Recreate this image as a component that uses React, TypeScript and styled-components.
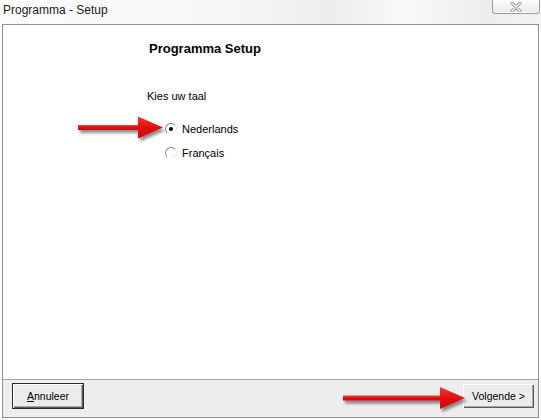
import React from "react";
import styled, { createGlobalStyle } from "styled-components";

const GlobalStyle = createGlobalStyle`
  html, body { margin: 0; padding: 0; background: #ffffff; }
  body { font-family: "Liberation Sans", Arial, sans-serif; }
  * { box-sizing: border-box; }
`;

const Page = styled.div`
  position: relative;
  width: 541px;
  height: 420px;
  display: flex;
  flex-direction: column;
  overflow: hidden;
  background: #ffffff;
`;

const TitleBar = styled.div`
  height: 24px;
  display: flex;
  align-items: flex-start;
  justify-content: space-between;
  background: linear-gradient(
    to right,
    #fcfcfc 0%,
    #f7f7f7 40%,
    #ededed 62%,
    #fafafa 75%,
    #ececec 90%,
    #f4f4f4 100%
  );
`;

const Title = styled.div`
  padding-left: 3px;
  padding-top: 2px;
  font-size: 12px;
  line-height: 16px;
  color: #1b1b1b;
`;

const CloseButton = styled.div`
  width: 48px;
  height: 14px;
  margin-right: 1px;
  border: 1px solid #9c9c9c;
  border-top: none;
  border-radius: 0 0 4px 4px;
  background: linear-gradient(to bottom, #fbfbfb, #e9e9e9);
  box-shadow: inset 0 -1px 0 #ffffff;
  display: flex;
  align-items: center;
  justify-content: center;
`;

const Window = styled.div`
  margin: 0 2px;
  height: 394px;
  border: 1px solid #8f8f8f;
  display: flex;
  flex-direction: column;
`;

const Content = styled.div`
  flex: 1;
  background: #ffffff;
  padding: 16px 0 0 144px;
  display: flex;
  flex-direction: column;
`;

const Heading = styled.div`
  font-size: 13px;
  font-weight: bold;
  line-height: 16px;
  color: #000000;
  padding-left: 2px;
`;

const Label = styled.div`
  margin-top: 32px;
  font-size: 11px;
  line-height: 14px;
  color: #000000;
`;

const RadioGroup = styled.div`
  margin-top: 19px;
  padding-left: 18px;
  display: flex;
  flex-direction: column;
  gap: 10px;
`;

const RadioRow = styled.label`
  display: flex;
  align-items: center;
  gap: 5px;
  height: 14px;
  font-size: 11px;
  color: #000000;
`;

const RadioCircle = styled.span<{ $checked?: boolean }>`
  width: 12px;
  height: 12px;
  border-radius: 50%;
  border: 1px solid;
  border-color: #7c7c7c #e2e2e2 #f4f4f4 #8a8a8a;
  background: #ffffff;
  display: flex;
  align-items: center;
  justify-content: center;
  &::after {
    content: "";
    width: 4px;
    height: 4px;
    border-radius: 50%;
    background: ${(p) => (p.$checked ? "#000000" : "transparent")};
  }
`;

const Footer = styled.div`
  height: 38px;
  border-top: 1px solid #a3a3a3;
  background: #ededed;
  display: flex;
  align-items: flex-start;
  justify-content: space-between;
  padding: 3px 3px 0 9px;
`;

const Button = styled.div<{ $default?: boolean }>`
  width: ${(p) => (p.$default ? "72px" : "73px")};
  height: 26px;
  display: flex;
  align-items: center;
  justify-content: center;
  font-size: 10.5px;
  color: #000000;
  background: #ececec;
  border: 1px solid ${(p) => (p.$default ? "#2a2a2a" : "#ececec")};
  box-shadow: inset 1px 1px 0 #ffffff, inset -1px -1px 0 #5a5a5a,
    inset -2px -2px 0 #a8a8a8;
  u { text-decoration: underline; }
`;

const Overlay = styled.svg`
  position: absolute;
  left: 0;
  top: 0;
  width: 541px;
  height: 420px;
  pointer-events: none;
`;

function Arrow({ x1, x2, y }: { x1: number; x2: number; y: number }) {
  const headStart = x2 - 25;
  return (
    <g filter="url(#shadow)">
      <rect x={x1} y={y - 2.5} width={headStart - x1 + 2} height={5} fill="url(#red)" />
      <polygon
        points={`${headStart},${y - 11} ${x2},${y} ${headStart},${y + 11}`}
        fill="url(#red)"
      />
    </g>
  );
}

export default function App() {
  return (
    <>
      <GlobalStyle />
      <Page>
        <TitleBar>
          <Title>Programma - Setup</Title>
          <CloseButton>
            <svg width="12" height="10" viewBox="0 0 12 10">
              <path d="M2 1 L10 9 M10 1 L2 9" stroke="#8a8a8a" strokeWidth="3" strokeLinecap="round" />
              <path d="M2 1 L10 9 M10 1 L2 9" stroke="#ffffff" strokeWidth="1.4" strokeLinecap="round" />
            </svg>
          </CloseButton>
        </TitleBar>
        <Window>
          <Content>
            <Heading>Programma Setup</Heading>
            <Label>Kies uw taal</Label>
            <RadioGroup>
              <RadioRow>
                <RadioCircle $checked />
                Nederlands
              </RadioRow>
              <RadioRow>
                <RadioCircle />
                Français
              </RadioRow>
            </RadioGroup>
          </Content>
          <Footer>
            <Button $default>
              <span>
                <u>A</u>nnuleer
              </span>
            </Button>
            <Button>Volgende &gt;</Button>
          </Footer>
        </Window>
        <Overlay viewBox="0 0 541 420">
          <defs>
            <linearGradient id="red" x1="0" y1="0" x2="0" y2="1">
              <stop offset="0" stopColor="#f23a3a" />
              <stop offset="0.5" stopColor="#e01010" />
              <stop offset="1" stopColor="#c80d0d" />
            </linearGradient>
            <filter id="shadow" x="-20%" y="-50%" width="140%" height="200%">
              <feDropShadow dx="2" dy="3" stdDeviation="1.6" floodColor="#000000" floodOpacity="0.45" />
            </filter>
          </defs>
          <Arrow x1={78} x2={163} y={127.5} />
          <Arrow x1={343} x2={465} y={398} />
        </Overlay>
      </Page>
    </>
  );
}
